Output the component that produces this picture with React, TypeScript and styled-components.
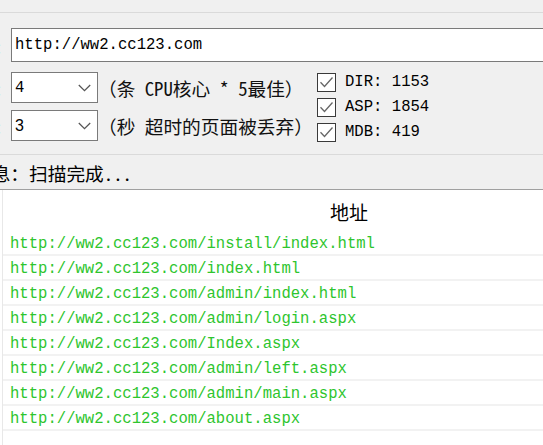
import React from "react";
import styled, { createGlobalStyle } from "styled-components";

const Global = createGlobalStyle`
  html, body { margin: 0; padding: 0; background: #f0f0f0; overflow: hidden; }
  body { font-family: "Noto Sans CJK SC", sans-serif; }
`;

const MONO = `"Liberation Mono", "Noto Sans Mono CJK SC", monospace`;
const MIXED = `"Noto Sans Mono CJK SC", "Liberation Mono", "Noto Sans CJK SC", monospace`;

const Page = styled.div`
  width: 543px;
  height: 445px;
  overflow: hidden;
  display: flex;
  flex-direction: column;
`;

const TopBar = styled.div`
  height: 12px;
  flex: none;
  border-bottom: 1px solid #dadada;
`;

const Form = styled.div`
  padding-top: 15px;
  flex: none;
`;

const FieldRow = styled.div<{ $h: number }>`
  display: flex;
  align-items: center;
  height: ${(p) => p.$h}px;
`;

const Label = styled.span`
  flex: none;
  width: 60px;
  margin-left: -57px;
  margin-right: 8px;
  text-align: right;
  white-space: nowrap;
  font-family: ${MIXED};
  font-size: 18.7px;
  color: #000;
`;

const UrlInput = styled.input`
  flex: 1;
  margin-right: -20px;
  height: 34px;
  box-sizing: border-box;
  border: 1px solid #7a7a7a;
  background: #fff;
  padding: 0 0 0 3px;
  font-family: ${MONO};
  font-size: 15.6px;
  color: #000;
  outline: none;
`;

const Options = styled.div`
  display: grid;
  grid-template-columns: 317px 1fr;
  margin-top: 10px;
  height: 71px;
`;

const LeftCol = styled.div`
  display: flex;
  flex-direction: column;
  gap: 7px;
`;

const SelectBox = styled.div`
  flex: none;
  width: 87px;
  height: 31px;
  box-sizing: border-box;
  border: 1px solid #7a7a7a;
  background: #fff;
  display: flex;
  align-items: center;
  justify-content: space-between;
  padding: 0 6px 0 3px;
`;

const SelectValue = styled.span<{ $sans?: boolean }>`
  font-family: ${(p) => (p.$sans ? `"Liberation Sans", sans-serif` : MONO)};
  font-size: ${(p) => (p.$sans ? "16px" : "15.6px")};
  color: #000;
`;

const Hint = styled.span`
  white-space: pre;
  font-family: ${MIXED};
  font-size: 18.7px;
  color: #111;
`;

const RightCol = styled.div`
  display: flex;
  flex-direction: column;
  gap: 5px;
`;

const CheckRow = styled.div`
  display: flex;
  align-items: center;
  height: 20px;
`;

const Box = styled.span`
  width: 19px;
  height: 19px;
  box-sizing: border-box;
  border: 1px solid #3a3a3a;
  background: #fff;
  display: flex;
  align-items: center;
  justify-content: center;
  flex: none;
`;

const CheckLabel = styled.span`
  margin-left: 9px;
  font-family: ${MONO};
  font-size: 15.6px;
  color: #000;
  white-space: pre;
`;

const StatusBar = styled.div`
  flex: none;
  margin-top: 11px;
  border-top: 1px solid #dadada;
  height: 35px;
  box-sizing: border-box;
  padding-top: 0;
  display: flex;
  align-items: center;
`;

const StatusText = styled.span`
  margin-left: -27px;
  white-space: pre;
  font-family: ${MIXED};
  font-size: 18.7px;
  color: #000;
`;

const List = styled.div`
  flex: 1;
  background: #fff;
  border-top: 1px solid #a0a0a0;
  display: flex;
  flex-direction: column;
`;

const ListInner = styled.div`
  margin-left: 2px;
  border-left: 1px solid #e8e8e8;
  flex: 1;
`;

const Header = styled.div`
  height: 41px;
  width: 692px;
  display: flex;
  align-items: center;
  justify-content: center;
  font-family: "Noto Sans CJK SC", sans-serif;
  font-size: 19px;
  color: #000;
  padding-top: 2px;
  box-sizing: border-box;
`;

const Row = styled.div`
  height: 25px;
  box-sizing: border-box;
  border-bottom: 2px solid #f2f2f2;
  padding: 2px 0 0 7px;
  display: flex;
  align-items: center;
  font-family: ${MONO};
  font-size: 15.6px;
  color: #2ec52e;
  white-space: pre;
`;

const Chevron = () => (
  <svg width="13" height="8" viewBox="0 0 13 8">
    <path d="M0.8 1 L6.5 6.6 L12.2 1" fill="none" stroke="#555" strokeWidth="1.3" />
  </svg>
);

const Check = () => (
  <svg width="17" height="17" viewBox="0 0 17 17">
    <path d="M2.5 8.3 L6.5 12.5 L14.5 3.5" fill="none" stroke="#666" strokeWidth="1.3" />
  </svg>
);

const urls = [
  "http://ww2.cc123.com/install/index.html",
  "http://ww2.cc123.com/index.html",
  "http://ww2.cc123.com/admin/index.html",
  "http://ww2.cc123.com/admin/login.aspx",
  "http://ww2.cc123.com/Index.aspx",
  "http://ww2.cc123.com/admin/left.aspx",
  "http://ww2.cc123.com/admin/main.aspx",
  "http://ww2.cc123.com/about.aspx",
];

const checks = ["DIR: 1153", "ASP: 1854", "MDB: 419"];

export default function App() {
  return (
    <>
      <Global />
      <Page>
        <TopBar />
        <Form>
          <FieldRow $h={34}>
            <Label>域名:</Label>
            <UrlInput readOnly value="http://ww2.cc123.com" />
          </FieldRow>
          <Options>
            <LeftCol>
              <FieldRow $h={31}>
                <Label>线程:</Label>
                <SelectBox>
                  <SelectValue>4</SelectValue>
                  <Chevron />
                </SelectBox>
                <Hint>（条 CPU核心 * 5最佳）</Hint>
              </FieldRow>
              <FieldRow $h={31}>
                <Label>超时:</Label>
                <SelectBox>
                  <SelectValue $sans>3</SelectValue>
                  <Chevron />
                </SelectBox>
                <Hint>（秒 超时的页面被丢弃）</Hint>
              </FieldRow>
            </LeftCol>
            <RightCol>
              {checks.map((c) => (
                <CheckRow key={c}>
                  <Box>
                    <Check />
                  </Box>
                  <CheckLabel>{c}</CheckLabel>
                </CheckRow>
              ))}
            </RightCol>
          </Options>
        </Form>
        <StatusBar>
          <StatusText>信息：扫描完成...</StatusText>
        </StatusBar>
        <List>
          <ListInner>
            <Header>地址</Header>
            {urls.map((u) => (
              <Row key={u}>{u}</Row>
            ))}
          </ListInner>
        </List>
      </Page>
    </>
  );
}
